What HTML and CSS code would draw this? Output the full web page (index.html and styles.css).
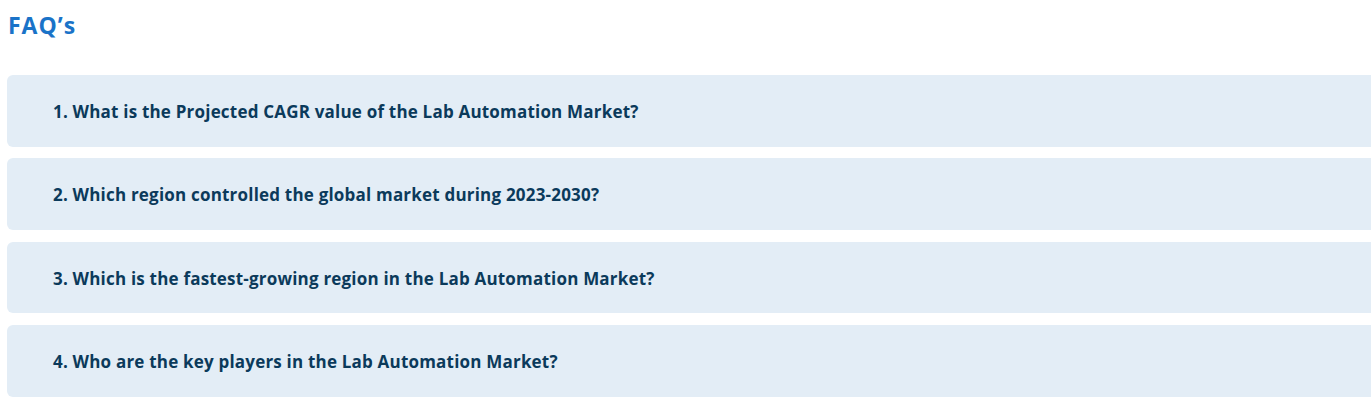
FILE: index.html
```html
<!DOCTYPE html>
<html lang="en">
<head>
    <meta charset="UTF-8">
    <meta name="viewport" content="width=device-width, initial-scale=1.0">
    <title>FAQ's</title>
    <link rel="stylesheet" href="styles.css">
</head>
<body>
    <section class="faq">
        <h2 class="faq-title">FAQ’s</h2>
        <div class="faq-list">
            <div class="faq-item">1. What is the Projected CAGR value of the Lab Automation Market?</div>
            <div class="faq-item">2. Which region controlled the global market during 2023-2030?</div>
            <div class="faq-item">3. Which is the fastest-growing region in the Lab Automation Market?</div>
            <div class="faq-item">4. Who are the key players in the Lab Automation Market?</div>
        </div>
    </section>
</body>
</html>
```

FILE: styles.css
```css
* {
    margin: 0;
    padding: 0;
    box-sizing: border-box;
}

html, body {
    overflow: hidden;
}

body {
    background-color: #ffffff;
    font-family: 'Open Sans', 'Noto Sans', sans-serif;
}

.faq {
    padding: 10px 0 0 7px;
}

.faq-title {
    color: #1a73c8;
    font-size: 23px;
    font-weight: 700;
    letter-spacing: 1px;
    line-height: 30px;
    padding-left: 1px;
    margin-bottom: 35px;
}

.faq-list {
    display: flex;
    flex-direction: column;
    gap: 11.6px;
    margin-right: -30px;
}

.faq-item {
    background-color: #e3edf6;
    border-radius: 6px;
    color: #0b3a5b;
    font-size: 17px;
    font-weight: 700;
    letter-spacing: 0.2px;
    line-height: 24px;
    padding: 25px 46px 22px;
    height: 71.7px;
}
```
